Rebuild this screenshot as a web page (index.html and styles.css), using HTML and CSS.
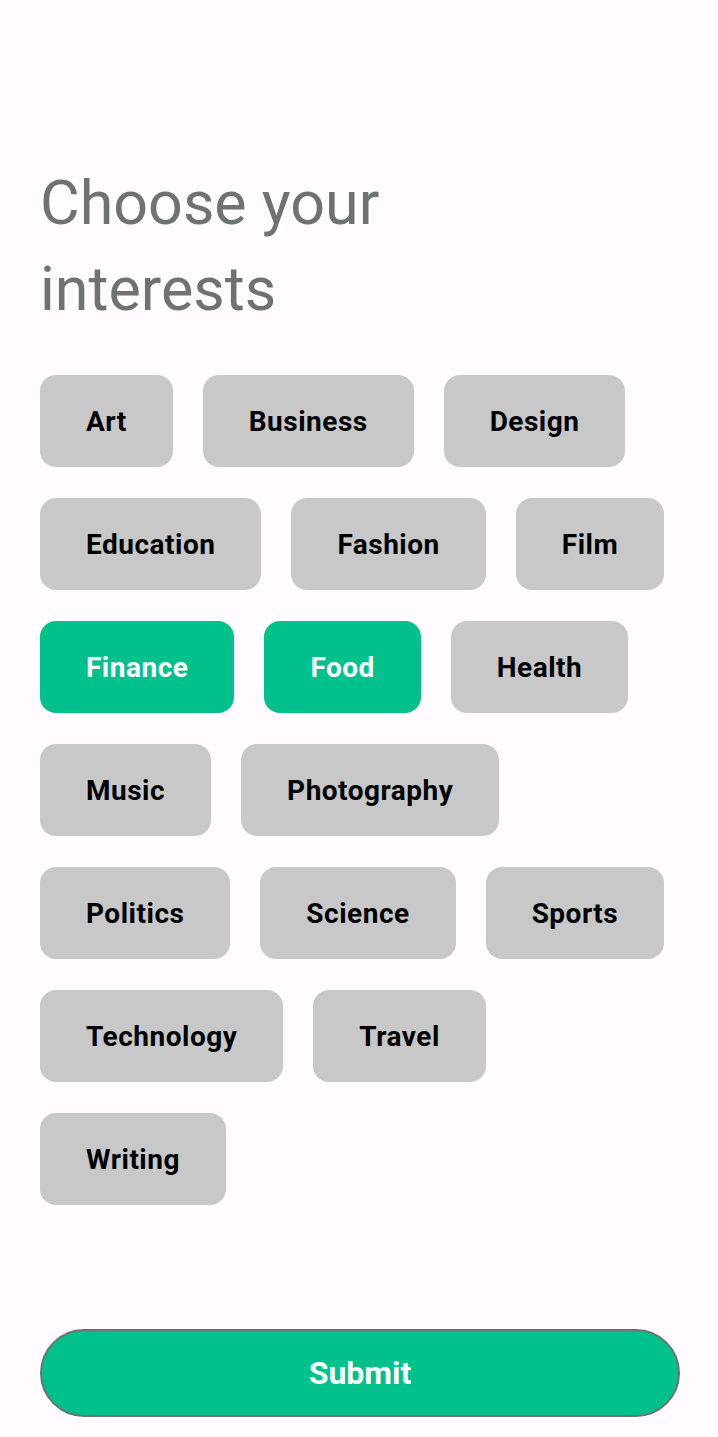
FILE: index.html
```html
<!DOCTYPE html>
<html>
<head>
<meta charset="utf-8">
<link rel="stylesheet" href="styles.css">
</head>
<body>
<main class="screen">
  <h1 class="title">Choose your<br>interests</h1>
  <div class="chips">
    <button class="chip">Art</button>
    <button class="chip">Business</button>
    <button class="chip">Design</button>
    <button class="chip">Education</button>
    <button class="chip">Fashion</button>
    <button class="chip">Film</button>
    <button class="chip chip--selected">Finance</button>
    <button class="chip chip--selected">Food</button>
    <button class="chip">Health</button>
    <button class="chip">Music</button>
    <button class="chip">Photography</button>
    <button class="chip">Politics</button>
    <button class="chip">Science</button>
    <button class="chip">Sports</button>
    <button class="chip">Technology</button>
    <button class="chip">Travel</button>
    <button class="chip">Writing</button>
  </div>
  <button class="submit">Submit</button>
</main>
</body>
</html>
```
FILE: styles.css
```css
* { box-sizing: border-box; }
html, body {
  margin: 0;
  padding: 0;
  background: #fffbfe;
  font-family: Roboto, "Liberation Sans", sans-serif;
}
.screen {
  height: 1437px;
  display: flex;
  flex-direction: column;
  padding: 160px 40px 20px 40px;
}
.title {
  margin: 0;
  font-size: 61px;
  line-height: 86px;
  font-weight: 400;
  color: #6f7370;
}
.chips {
  margin-top: 43px;
  display: flex;
  flex-wrap: wrap;
  column-gap: 30px;
  row-gap: 31px;
  width: 638px;
}
.chip {
  height: 92px;
  padding: 0 46px;
  border: none;
  border-radius: 16px;
  background: #c8c8c8;
  color: #000;
  font-family: Roboto, "Liberation Sans", sans-serif;
  font-size: 28px;
  letter-spacing: 0.5px;
  font-weight: 700;
  display: flex;
  align-items: center;
  justify-content: center;
}
.chip--selected {
  background: #00c18c;
  color: #fff;
}
.submit {
  margin-top: auto;
  height: 88px;
  width: 640px;
  border: 2px solid #6f7370;
  border-radius: 44px;
  background: #00c18c;
  color: #fff;
  font-family: Roboto, "Liberation Sans", sans-serif;
  font-size: 32px;
  font-weight: 700;
}
```
